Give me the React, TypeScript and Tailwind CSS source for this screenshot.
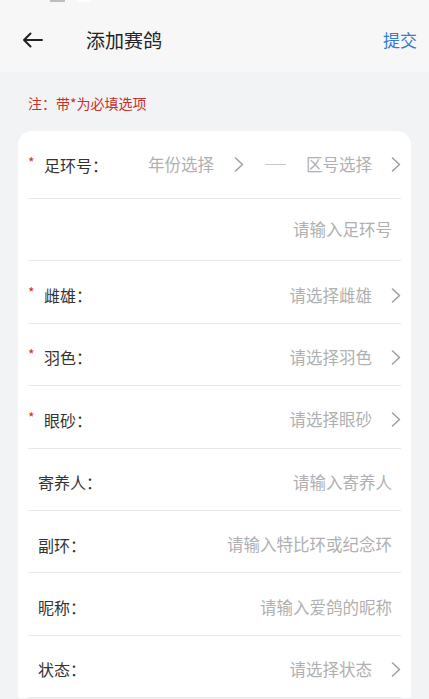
import React from 'react';

type Field = {
    label: string;
    placeholder: string;
    required?: boolean;
    select?: boolean;
};

const fields: Field[] = [
    { label: '雌雄', placeholder: '请选择雌雄', required: true, select: true },
    { label: '羽色', placeholder: '请选择羽色', required: true, select: true },
    { label: '眼砂', placeholder: '请选择眼砂', required: true, select: true },
    { label: '寄养人', placeholder: '请输入寄养人' },
    { label: '副环', placeholder: '请输入特比环或纪念环' },
    { label: '昵称', placeholder: '请输入爱鸽的昵称' },
    { label: '状态', placeholder: '请选择状态', select: true },
];

const Chevron: React.FC = () => (
    <svg width="10" height="15" viewBox="0 0 10 15" fill="none" className="shrink-0">
        <path d="M1.5 1 L8.5 7.5 L1.5 14" stroke="#9e9e9e" strokeWidth="1.5" strokeLinecap="round" strokeLinejoin="round" />
    </svg>
);

const Label: React.FC<{ text: string; required?: boolean }> = ({ text, required }) => (
    <div className="flex items-center">
        {required
            ? <span className="w-[16px] text-[14px] leading-none text-[#d0312d] -mt-[6px]">*</span>
            : <span className="w-[10px]" />}
        <span className="text-[16px] text-[#333]">{text}：</span>
    </div>
);

const App: React.FC = () => {
    return (
        <div className="w-[429px] min-h-[699px] bg-[#f2f3f5] font-['Noto_Sans_CJK_SC','Noto_Sans',sans-serif]">
            {/* header */}
            <div className="bg-[#f7f7f7] h-[72px] flex flex-col">
                <div className="h-[2px] flex">
                    <div className="ml-[50px] w-[15px] bg-[#bdbdbd]" />
                    <div className="ml-[12px] w-[14px] bg-white" />
                </div>
                <div className="flex items-center h-[64px] pt-[12px]">
                    <div className="ml-[22px] w-[22px] flex items-center">
                        <svg width="21" height="16" viewBox="0 0 21 16" fill="none">
                            <path d="M20 8 H2 M8.5 1.5 L2 8 L8.5 14.5" stroke="#222" strokeWidth="2" strokeLinecap="round" strokeLinejoin="round" />
                        </svg>
                    </div>
                    <span className="ml-[42px] text-[19px] text-[#222]">添加赛鸽</span>
                    <span className="ml-auto mr-[12px] text-[17px] text-[#3479d4]">提交</span>
                </div>
            </div>

            {/* note */}
            <div className="pt-[21px] pb-[18px] pl-[28px] text-[14px] leading-[20px] text-[#c8302c]">注：带*为必填选项</div>

            {/* form */}
            <div className="mx-[18px] bg-white rounded-t-[14px] px-[10px]">
                <div className="flex items-center h-[68px] border-b border-[#e8e8e8]">
                    <Label text="足环号" required />
                    <div className="ml-auto flex items-center text-[16.5px] text-[#b0b0b0]">
                        <span>年份选择</span>
                        <span className="ml-[20px]"><Chevron /></span>
                        <span className="ml-[21px] w-[21px] h-px bg-[#c8c8c8]" />
                        <span className="ml-[20px]">区号选择</span>
                        <span className="ml-[19px]"><Chevron /></span>
                    </div>
                </div>
                <div className="flex items-center justify-end h-[62.4px] border-b border-[#e8e8e8] pr-[9px]">
                    <span className="text-[16.5px] text-[#b0b0b0]">请输入足环号</span>
                </div>
                {fields.map(f => (
                    <div key={f.label} className="flex items-center h-[62.4px] pt-[6px] border-b border-[#e8e8e8]">
                        <Label text={f.label} required={f.required} />
                        <div className={`ml-auto flex items-center ${f.select ? '' : 'pr-[9px]'}`}>
                            <span className="text-[16.5px] text-[#b0b0b0]">{f.placeholder}</span>
                            {f.select && <span className="ml-[19px] flex"><Chevron /></span>}
                        </div>
                    </div>
                ))}
            </div>
        </div>
    );
};

export default App;
